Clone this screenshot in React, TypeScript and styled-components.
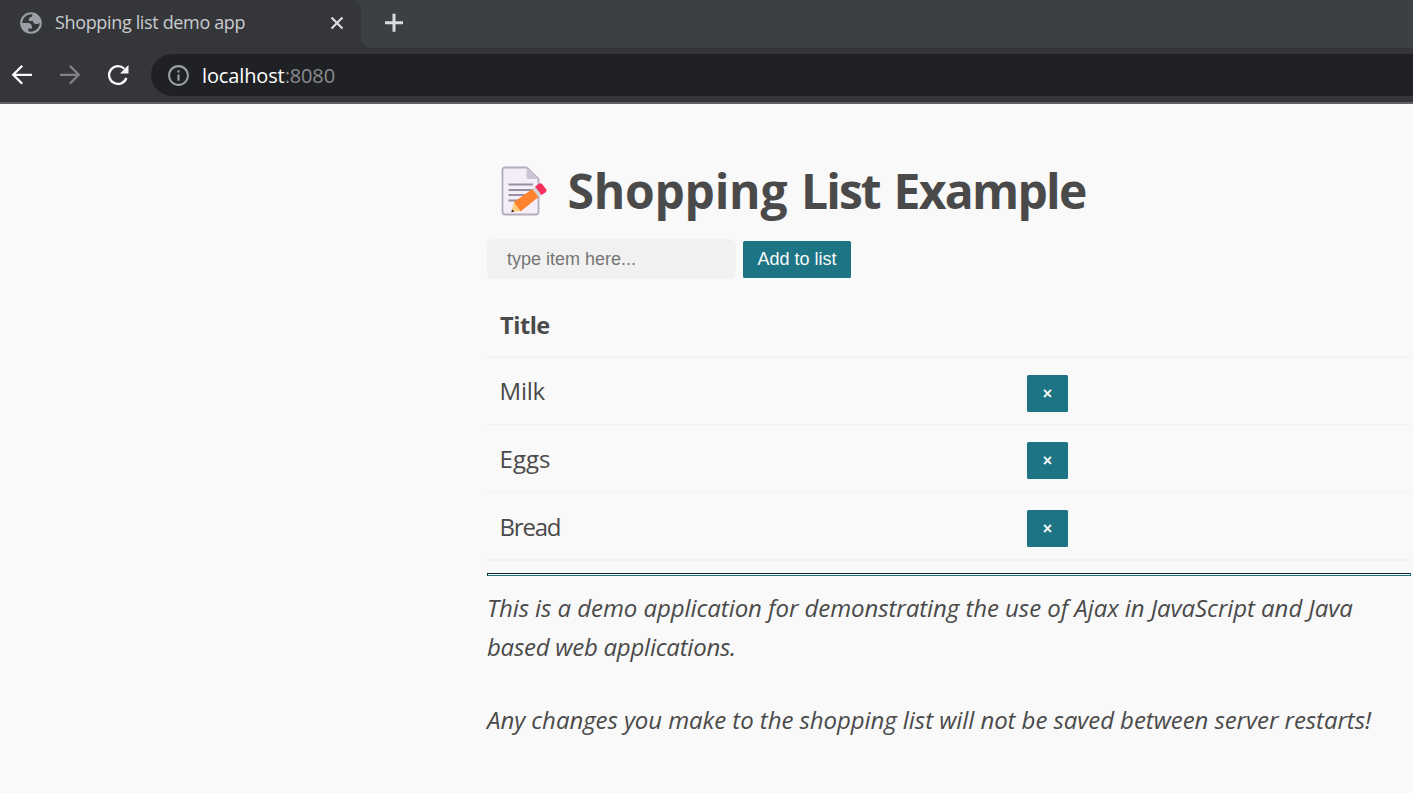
import React from 'react';
import styled, { createGlobalStyle, css } from 'styled-components';
import { MdInfoOutline } from 'react-icons/md';

const Global = createGlobalStyle`
  * { box-sizing: border-box; }
  body { margin: 0; background: #f9f9f9; overflow: hidden; }
`;
const Window = styled.div`
  display: flex;
  flex-direction: column;
  height: 793px;
  background: #f9f9f9;
  color: #4a4a4a;
  font-family: "Open Sans", "Noto Sans", sans-serif;
`;
const TabStrip = styled.div`
  display: flex;
  height: 48px;
  background: linear-gradient(to right, #35363a 40px, #3c4043 40px);
`;
const Tab = styled.div`
  display: flex;
  align-items: center;
  width: 361px;
  height: 48px;
  padding: 0 16px 2px 18px;
  background: #35363a;
  border-radius: 8px 8px 0 0;
`;
const TabTitle = styled.span`
  flex: 1;
  margin: -2px 0 0 11px;
  color: #c9cccf;
  font-size: 18px;
  white-space: nowrap;
  letter-spacing: -0.35px;
`;
const NewTab = styled.div`
  flex: 1;
  height: 48px;
  padding: 13px 0 0 23px;
  background: #3c4043;
  border-bottom-left-radius: 10px;
`;
const StripRest = styled.div`
  flex: 1;
  display: flex;
  background: #35363a;
`;
const Toolbar = styled.div`
  display: flex;
  align-items: center;
  height: 56px;
  padding-left: 7px;
  border-bottom: 2px solid #655f66;
  background: #35363a;
`;
const NavButton = styled.span<{ $dim?: boolean }>`
  display: flex;
  width: 30px;
  margin-right: 18px;
  color: ${p => (p.$dim ? '#808285' : '#f8f9fa')};
`;
const AddressBar = styled.div`
  flex: 1;
  display: flex;
  align-items: center;
  height: 42px;
  padding-left: 15px;
  background: #202124;
  border-radius: 21px 0 0 21px;
  color: #9aa0a6;
`;
const Url = styled.span`
  margin-left: 11px;
  font-size: 20px;
  color: #8a8c8f;
  letter-spacing: -0.13px;
  b { color: #fff; font-weight: 400; }
`;
const Page = styled.main`
  width: 924px;
  margin-left: 487px;
  padding-top: 55px;
`;
const Heading = styled.h1`
  display: flex;
  align-items: center;
  height: 64px;
  margin: 0;
  padding-left: 13px;
  font-size: 48px;
  font-weight: 700;
  white-space: pre;
  svg { margin-right: 19.5px; flex: none; }
`;
const HeadingText = styled.span`
  margin-top: -2px;
`;
const Word = styled.span<{ $track: number }>`
  letter-spacing: ${p => p.$track}px;
`;
const Form = styled.form`
  display: flex;
  align-items: center;
  height: 40px;
  margin-top: 16px;
`;
const TextInput = styled.input`
  width: 249px;
  height: 40px;
  margin-right: 7px;
  padding: 0 20px;
  border: 0;
  border-radius: 6px;
  background: #f1f1f1;
  font: 18px "Liberation Sans", Arial, sans-serif;
  &::placeholder { color: #757575; opacity: 1; }
`;
const buttonLook = css`
  display: flex;
  align-items: center;
  justify-content: center;
  height: 37px;
  padding: 0;
  border: 0;
  border-radius: 1.5px;
  background: #1d7484;
  color: #f9f9f9;
  font-family: "Liberation Sans", Arial, sans-serif;
  font-size: 18px;
`;
const AddButton = styled.button`
  ${buttonLook}
  width: 108px;
  white-space: nowrap;
`;
const RemoveButton = styled.button`
  ${buttonLook}
  width: 41px;
  font-size: 16px;
  font-weight: 700;
`;
const List = styled.div`
  margin-top: 15px;
  border-bottom: 1px solid #f1f1f1;
`;
const HeadRow = styled.div`
  height: 64px;
  padding: 12px 13px 0;
  border-bottom: 2px solid #f1f1f1;
  font-size: 23.5px;
  font-weight: 700;
  line-height: 38px;
  letter-spacing: -0.45px;
`;
const Row = styled.div<{ $h: number }>`
  display: grid;
  grid-template-columns: 527px 1fr;
  height: ${p => p.$h}px;
  padding: 17px 0 0 13px;
  border-bottom: 1px solid #f1f1f1;
`;
const ItemTitle = styled.span<{ $track: number; $line: number }>`
  margin-left: -0.5px;
  font-size: 24px;
  line-height: ${p => p.$line}px;
  letter-spacing: ${p => p.$track}px;
`;
const Rule = styled.hr`
  width: 100%;
  height: 3px;
  margin: 12px 0 12px;
  border: 1px inset #1d7484;
`;
const Note = styled.p`
  margin: 0 0 34px;
  font-size: 24px;
  font-style: italic;
  line-height: 39px;
  white-space: nowrap;
  letter-spacing: -0.065px;
`;
const NoteEnd = styled.span`
  letter-spacing: -0.25px;
`;

const GlobeIcon = () => (
  <svg width="26" height="26" viewBox="0 0 24 24" fill="#9aa0a6">
    <path fillRule="evenodd" d="M12 2c5.520 0 10 4.480 10 10s-4.480 10-10 10S2 17.520 2 12 6.480 2 12 2zM4 12h4.400c3.407.022 4.922 1.730 4.543 5.127H9.488v2.470a8.004 8.004 0 0 0 10.498-8.083C19.327 12.504 18.332 13 17 13c-2.137 0-3.206-.916-3.206-2.750h-3.748c-.274-2.728.683-4.092 2.870-4.092 0-.975.327-1.597.811-1.970A8.004 8.004 0 0 0 4 12z" />
  </svg>
);
const BackIcon = () => (
  <svg width="30" height="30" viewBox="0 0 30 30" fill="none" stroke="currentColor" strokeWidth="2.300">
    <path d="M25 14.800H6.500M15.200 5.800l-9 9 9 9" />
  </svg>
);
const ForwardIcon = () => (
  <svg width="30" height="30" viewBox="0 0 30 30" fill="none" stroke="currentColor" strokeWidth="2.300">
    <path d="M5 14.800h18.500M14.800 5.800l9 9-9 9" />
  </svg>
);
const ReloadIcon = () => (
  <svg width="30" height="30" viewBox="0 0 30 30" fill="none">
    <path d="M23.400 18A8.900 8.900 0 1 1 21.300 8.700" stroke="currentColor" strokeWidth="2.300" />
    <path d="M25.500 5v8.500H17z" fill="currentColor" />
  </svg>
);
const MemoIcon = () => (
  <svg width="48" height="50" viewBox="0 0 48 50">
    <path d="M5 1.500h21.500L38.500 13v33a2.500 2.500 0 0 1-2.500 2.500H5A2.500 2.500 0 0 1 2.500 46V4A2.500 2.500 0 0 1 5 1.500z" fill="#f3eef8" stroke="#b4acbc" strokeWidth="1.8" />
    <path d="M26.500 1.500 38.500 13H29a2.500 2.500 0 0 1-2.500-2.500z" fill="#cdc4d6" />
    <path d="M8.500 18.500h24.500M8.500 24h24.500M8.500 29h17M8.500 34.500h10" stroke="#998ea4" strokeWidth="1.8" />
    <path d="m11.500 46 2.500-10 7 9z" fill="#ffce7c" />
    <path d="m11.300 46.200.8-3 2.200 2.600z" fill="#402a32" />
    <path d="m14 36 18.500-13 6 8L20.500 45.500z" fill="#ff822d" />
    <path d="m32.500 23 3.500-2.500 6 8-3.500 2.500z" fill="#d3d3d3" />
    <path d="m35 20.500 4-2.800q1.800-1 3.200.6l4 5q1 1.700-.6 3l-4 2.800z" fill="#f92f60" />
  </svg>
);

const rows = [
  { title: 'Milk', h: 67, track: -0.2, line: 32 },
  { title: 'Eggs', h: 68, track: 0.05, line: 34 },
  { title: 'Bread', h: 67, track: -1.2, line: 34 },
];

export default function App() {
  return (
    <Window>
      <Global />
      <TabStrip>
        <Tab>
          <GlobeIcon />
          <TabTitle>Shopping list demo app</TabTitle>
          <svg width="16" height="16" viewBox="0 0 16 16" stroke="#dadce0" strokeWidth="2.200"><path d="m2.500 2.500 11 11m0-11-11 11" /></svg>
        </Tab>
        <StripRest>
          <NewTab>
            <svg width="20" height="20" viewBox="0 0 20 20" stroke="#dadce0" strokeWidth="3"><path d="M10 .8v18M1 9.800h18" /></svg>
          </NewTab>
        </StripRest>
      </TabStrip>
      <Toolbar>
        <NavButton><BackIcon /></NavButton>
        <NavButton $dim><ForwardIcon /></NavButton>
        <NavButton><ReloadIcon /></NavButton>
        <AddressBar>
          <MdInfoOutline size={25} />
          <Url><b>localhost</b>:8080</Url>
        </AddressBar>
      </Toolbar>
      <Page>
        <Heading>
          <MemoIcon />
          <HeadingText>
            <Word $track={-0.250}>Shopping</Word>
            <Word $track={1.200}> </Word>
            <Word $track={-1.9}>List</Word>
            <Word $track={1.200}> </Word>
            <Word $track={-1.7}>Example</Word>
          </HeadingText>
        </Heading>
        <Form>
          <TextInput placeholder="type item here..." />
          <AddButton type="button">Add to list</AddButton>
        </Form>
        <List>
          <HeadRow>Title</HeadRow>
          {rows.map(r => (
            <Row key={r.title} $h={r.h}>
              <ItemTitle $track={r.track} $line={r.line}>{r.title}</ItemTitle>
              <RemoveButton>×</RemoveButton>
            </Row>
          ))}
        </List>
        <Rule />
        <Note>
          This is a demo application for demonstrating the use of Ajax in JavaScript and Java<br />
          <NoteEnd>based web applications.</NoteEnd>
        </Note>
        <Note>Any changes you make to the shopping list will not be saved between server restarts!</Note>
      </Page>
    </Window>
  );
}
